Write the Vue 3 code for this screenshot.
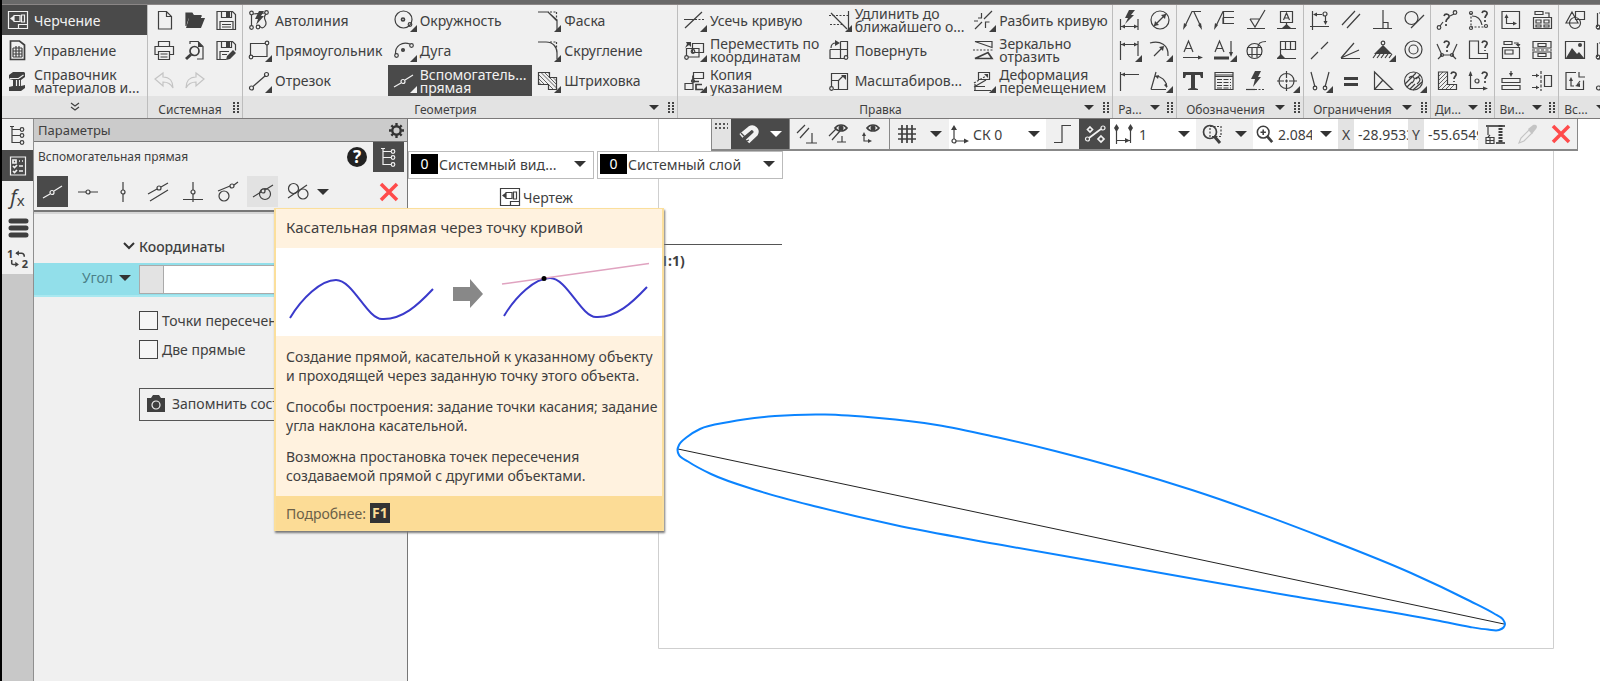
<script setup>
import { ref } from 'vue'

const icons = {
  drawing: '<path d="M.5 1.500h19v17h-19zM10.500 18.500v-4h9M3 8.500h3v-3h6v6h-6v-3M3 8.500l2-1.500v3zM13.500 5h3v7h-3z"/>',
  report: '<path d="M2.500 1h9l5 4v14.500h-14z" class="thick"/><path d="M5 8h9M5 11h9M5 14h9M5 17h9M5 8v9M8 6v11M11 6v11M14 8v9"/>',
  beam: '<path class="solid" d="M5 1h11l1 1v4l-4 3v6l4-1v3l-4 3H1v-4l4-1V9L1 8V4z"/><path class="cut" d="M1.500 7.500h9l5-3.500M8.500 9v6M11.500 9v6"/>',
  chevrons: '<path d="M4 3l4 3 4-3M4 7l4 3 4-3"/>',
  file: '<path d="M4.500 1.500h8l5 5v12.500h-13zM12.500 1.500v5h5"/>',
  folder: '<path d="M1 16V3h6l1.500 2.500H16V7" /><path class="solid" d="M4 8h16l-4 10H1z"/><path class="solid" d="M1 3h6l2 3h7v2H4l-3 8z"/>',
  save: '<path d="M1 1.500h15.500l3 3v15H1zM5.500 1.500v6h10v-6M4 19.500v-8h13v8M6 14.500h9M6 17h9"/><path class="solid" d="M10 2h4v5h-4z"/>',
  print: '<path d="M4.500 6.500v-5h11v5M4.500 14.500H1v-8h18.500v8h-4M4.500 11.500h11v8h-11zM6.500 14h7M6.500 17h7"/>',
  preview: '<path d="M5 4V1.500h8l5 5v12.500h-6"/><circle cx="9.500" cy="11" r="4.500" class="thick"/><path class="heavy" d="M6 14.500L1 19"/><path class="solid" d="M13 1v6h5z"/>',
  saveEdit: '<path d="M10 19.500H1v-18h15.500l3 3v6M5.500 1.500v6h10v-6M4 19.500v-8h9M6 14.500h5"/><path class="solid" d="M10 2h4v5h-4zM11 16l6-6 3 3-6 6-4 1z"/>',
  undo: '<path class="faint" d="M1 8l8-6v4c7 0 10 5 10 11-2-4-5-6-10-6v4z"/>',
  redo: '<path class="faint" d="M19 8l-8-6v4C4 6 1 11 1 17c2-4 5-6 10-6v4z"/>',
  autoline: '<path d="M2.500 16V5M4 4l12-1M17 4c-5 5 3 7-1 12-2 3-5 2-6-1"/><circle cx="2.500" cy="3" r="1.800"/><circle cx="2.500" cy="17.500" r="1.800"/><circle cx="17.500" cy="2.500" r="1.800"/><circle cx="9" cy="17" r="1.800"/><path class="solid" d="M10 1h5l-3 5h3l-8 9 2-6H6z"/>',
  rect: '<path d="M1.500 15V3.500H16M18 5v11.500H4"/><circle cx="18" cy="3" r="1.800"/><circle cx="2" cy="17" r="1.800"/>',
  segment: '<path d="M4 15.500L16 5"/><circle cx="17.500" cy="3.500" r="2"/><circle cx="2.500" cy="17" r="2"/>',
  circle: '<circle cx="9.500" cy="9.500" r="8.500"/><circle cx="9" cy="9.500" r="1.500" class="thick"/><circle cx="16" cy="14.500" r="1.800"/>',
  arc: '<path d="M1.500 14C1 6 8 1 16 4"/><circle cx="17.500" cy="5.500" r="1.800"/><circle cx="2.500" cy="15.500" r="1.800"/><circle cx="9" cy="10" r="1.200" class="thick"/>',
  auxline: '<path d="M0 16l7-4M11 9l8-5"/><circle cx="9" cy="10.500" r="2"/>',
  chamfer: '<path d="M0 2h10l9 8v10M10 2l9 9"/><path stroke-dasharray="2 1.500" d="M12 2h7M18.500 2v8"/>',
  fillet: '<path d="M0 2h8c7 0 11 5 11 11v6"/><path stroke-dasharray="2 1.500" d="M12 2h7M18.500 2v8"/>',
  hatch: '<path d="M.5 1.500h11v5h7v12h-8v-5h-10z"/><path class="thin" d="M.5 3.500l10 10M.5 7.500l6 6M.5 11l2.500 2.500M3 1.500l16 16M6.500 1.500l5 5M11.500 6.500l7 7M10 1.500l1.500 1.500M15 6.500l3.500 3.500M10.500 13.500l5 5"/>',
  trim: '<path d="M0 9.500h11M1 18L18 2"/><path stroke-dasharray="2 1.500" d="M11 9.500h9"/>',
  move: '<path d="M8.500 3.500h11v9h-11zM2.500 8v8M4 17h11V8.500H2.500"/><circle cx="9" cy="11.500" r="1.800"/><circle cx="2.500" cy="17.500" r="1.800"/><path class="solid" d="M2 2h5v5l-2-2-4 3 2-4z"/>',
  copyPoint: '<path d="M9.500 1.500h10v6h-10zM1 12.500h8v6H1z"/><path class="thick" d="M9 4.500v6h6M18 13.500h-6v5h7"/><circle cx="9" cy="10" r="1.500"/>',
  extend: '<path d="M2 3l16 16M19.500 1v18"/><path stroke-dasharray="2 1.500" d="M0 5.500h19M1 14.500h13"/>',
  rotate: '<path d="M11.500 1.500h7v15M11.500 1.500v17M1 9.500h17M1 9.500v9h14"/><circle cx="17" cy="17.500" r="1.800"/><path d="M2 8c0-3 2-5 5-5"/><path class="solid" d="M6 0l5 3-5 3z"/>',
  scale: '<path d="M2.500 16V2.500h16v16H4.500M2.500 9.500h7v9M9.500 9.500L14 5"/><circle cx="2.500" cy="17.500" r="1.800"/><path class="solid" d="M12 4h5v5z"/>',
  split: '<path d="M2 19L9 12M11 9l8-8M5 8h4M8.500 3v5M12.500 18v-6h4M1 11h4"/>',
  mirror: '<path d="M2 1.500h17v6z"/><path stroke-dasharray="2 1.500" d="M0 10h20"/><path class="thick" d="M2 18.500h17l-4-6z"/>',
  deform: '<path d="M5.500 1.500h11v7h-11zM1 16l12-7M2 15.500h10M1 19.500h17M2 13v6"/><path stroke-dasharray="2 1.500" d="M1 12l12-7"/><path class="solid" d="M11 3h4v4z"/>',
  autoDim: '<path d="M1.500 9v11M19 9v11M2 16.500h17"/><path class="solid" d="M10 0h6l-4 5h3l-9 9 3-6H6zM2 16.500l4-2v4zM19 16.500l-4-2v4z"/>',
  diameter: '<circle cx="10" cy="10" r="9"/><path d="M4 16L16 4"/><path class="solid" d="M16 4l-1 5-4-4zM4 16l1-5 4 4z"/>',
  linearDim: '<path d="M1.500 1v19M19 1v15M2 4.500h17"/><path class="solid" d="M2 4.500l4-2v4zM19 4.500l-4-2v4z"/>',
  radius: '<path d="M0 3c10-3 19 2 18 13M4 16l8-8"/><path class="solid" d="M14 6l-1 5-4-4z"/>',
  height: '<path d="M1.500 1v19M2 3.500h18"/><path class="solid" d="M2 3.500l4-2v4z"/>',
  angleDim: '<path d="M1 18.500L6 1M1 18.500h15M5 5c6 0 11 4 12 11"/><path class="solid" d="M5 5l4-1-1 4zM17 17l-3-3 3-2z"/>',
  leader: '<path d="M2 16L9 1.500h9M11 2l7 15"/><path class="solid" d="M0 20l1-7 3 2zM19 20l-4-5 3-2z"/>',
  leaderNote: '<path d="M2 16L9 1.500h11M9 7.500h11M9 7.500v6h11M9.500 2v12"/><path class="solid" d="M0 20l1-7 3 2z"/>',
  roughness: '<path d="M1 18.500h18M4 9h10M4 9l5 8L19 0"/>',
  base: '<path d="M3.500 1.500h12v11h-12zM9.500 13v5M0 18.500h19M6.500 10l3-7 3 7M7.500 8h4"/><path class="solid" d="M5 18l4.500-4 4.500 4z"/>',
  arrowA: '<path d="M1 12L5.500 1 10 12M2.500 8.500h6M0 17.500h17"/><path class="solid" d="M20 17.500l-5-2v4z"/>',
  lineA: '<path d="M1 12L5.500 1 10 12M2.500 8.500h6M17 1v13"/><path class="heavy" d="M0 18h15"/><path class="solid" d="M17 17l-2-5h4z"/>',
  section: '<circle cx="8.500" cy="11" r="7.500"/><path d="M1 7.500h15M1 14.500h15M6 7.500v10M11 7.500v10M12 7c0-4 3-5.500 8-5.500"/>',
  flag: '<path d="M3.500 18V1.500h15v8h-15M8.500 2v7M13.500 2v7M0 18.500h19"/><path class="solid" d="M0 18l4-4 4 4z"/>',
  text: '<path class="solid" d="M0 1h20v6h-2l-1-3h-5v13l3 1v1H5v-1l3-1V4H3L2 7H0z"/>',
  table: '<path d="M1 1.500h18v17H1zM1 5.500h18M1 4h18"/><path stroke-dasharray="5 1.500" d="M3 8.500h14M3 11.500h14M3 14.500h14M3 17h14"/>',
  bolt: '<path class="solid" d="M9 0h6l-3 6h3L7 16l2-8H5z"/><path d="M0 18.500h9"/><path stroke-dasharray="2 1.500" d="M9 18.500h10"/>',
  target: '<circle cx="9.500" cy="10" r="7.500"/><path d="M0 10h7M12 10h8M9.500 0v7M9.500 13v7M8 10h3M9.500 8.500v3"/>',
  snapFix: '<path d="M2.500 1v19M0 16.500h19M4 4.500h8M15.500 6v6"/><circle cx="15" cy="4" r="2"/><path class="solid" d="M3 4.500l4-2v4zM15.500 15l-2-4h4z"/>',
  parallel: '<path d="M1 15L14 1M6 18L19 4"/>',
  perpendicular: '<path d="M0 18.500h19M10 0v18M10 12.500h5v6"/>',
  tangentCircle: '<circle cx="7.500" cy="8" r="6.500"/><path d="M7 18L20 5"/>',
  collinear: '<path d="M1 19l7-7M11 9l7-7"/>',
  anglePair: '<path d="M0 18.500h19M0 18L18 10M0 18L13 3"/>',
  anchor: '<path class="solid" d="M10 5L1 14h18z"/><circle cx="10" cy="3" r="1.800"/><path d="M3 14l-3 4M7 14l-3 4M11 14l-3 4M15 14l-3 4M19 14l-3 4"/>',
  concentric: '<circle cx="9.500" cy="9.500" r="8.500"/><circle cx="9.500" cy="9.500" r="4.500"/>',
  symmetric: '<path d="M1 1l4 15M19 1l-4 15"/><circle cx="5" cy="17" r="1.800"/><circle cx="15" cy="17" r="1.800"/>',
  equal: '<path class="heavy" d="M3 7.500h14M3 13.500h14"/>',
  bisector: '<path d="M1.500 1v17.500h18zM1.500 18.500L10 9"/>',
  mesh: '<circle cx="9.500" cy="10" r="9"/><path d="M1 13L12 2M3 16L8 11M6 18l5-5M9 19l9-8M12 8l4-4"/><path d="M5 7c3-4 8 0 3 5M11 8c3-4 8 0 2 5"/>',
  distAsk: '<path d="M3 16L6 12M13 6l4-2"/><circle cx="2" cy="17.500" r="1.800"/><circle cx="18" cy="2.500" r="1.800"/><path class="thick" d="M7 6c1-3 6-2 5 1-1 2-3 2-3 5M9 14v2"/>',
  arcAsk: '<path stroke-dasharray="2 1.500" d="M3 3v14h14"/><path d="M4 6c7 0 9 4 10 9"/><circle cx="3" cy="3" r="1.500"/><circle cx="3" cy="18" r="1.500"/><circle cx="18" cy="16" r="1.500"/><path class="thick" d="M14 3c1-3 6-2 5 1-1 2-2 2-2 4M17 10v2"/>',
  nodesAsk: '<path d="M0 4l5 11-4 4M20 4l-5 11 4 4M6 15h8"/><circle cx="5" cy="15" r="1.500"/><circle cx="15" cy="15" r="1.500"/><path class="thick" d="M7 3c1-3 6-2 5 1-1 2-2 2-2 4M10 10v2"/>',
  areaAsk: '<path d="M1.500 1v17.500h18v-5h-9V1z"/><path class="thick" d="M14 3c1-3 6-2 5 1-1 2-2 2-2 4M17 10v1"/>',
  hatchAsk: '<path d="M1.500 1v17.500h18v-5h-9V1z"/><path class="thin" d="M2 5l4-4M2 9l8-8M2 13l8-8M2 17l8-8M5 18l5-5M9 18l5-5M13 18l5-5"/><path class="thick" d="M14 3c1-3 6-2 5 1-1 2-2 2-2 4M17 10v1"/>',
  coordAsk: '<path d="M2.500 1v16.500H19"/><circle cx="9" cy="10" r="2"/><path class="solid" d="M2.500 0L.5 5h4zM20 17.500l-5-2v4z"/><path class="thick" d="M14 3c1-3 6-2 5 1-1 2-2 2-2 4M17 10v2"/>',
  viewNew: '<path d="M1 1.500h17.500v17H1zM5.500 6v7.500H14"/><path class="solid" d="M5.500 4l-2 4h4zM16 13.500l-4-2v4z"/>',
  viewSet: '<path d="M3 1.500h8v3H3zM1.500 7.500h18v11h-18zM4 10h5v3H4zM12 10h5v3h-5zM4 15h5v2H4zM12 15h5v2h-5zM13 3h4v4"/>',
  viewLocal: '<path d="M3 1.500h8v3H3zM1.500 7.500h17v11h-17zM4 10h8v4H4zM13 3h4v3"/><path class="solid" d="M14.500 4l3 3 2-3z"/>',
  viewBreak: '<path d="M1 8V1.500h18V8zM6 3.500h8v3H6zM6 13.500h8v3H6zM1 12v6.500h18V12z"/><path stroke-dasharray="3 1.500" d="M0 10h20"/>',
  stack: '<path d="M1 7.500h18v4H1zM1 14.500h18v4H1zM10 0v4"/><path class="solid" d="M10 6L8 2h4z"/>',
  align: '<path d="M12.500 4.500h7v11h-7zM0 4.500h7M0 16.500h7"/><path stroke-dasharray="3 1.500" d="M9 0v20"/><path class="solid" d="M7 4.500l-3-2v4zM7 16.500l-3-2v4z"/>',
  shapes: '<path d="M7 2l6 11H1zM10.500 1.500h9v8h-9z"/><circle cx="10" cy="13" r="5.500"/>',
  image: '<path d="M.5 1.500h19v17H.5z"/><path class="solid" d="M1 18l6-10 5 6 2-2 5 6z"/><circle class="solid" cx="15" cy="5" r="2"/>',
  fragment: '<path d="M11 1.500H1v17h17.500v-9M6 8v7h3M15 10l-3 4M14 1v5h6"/><path class="solid" d="M6 6l-2 4h4zM10 15l5-3v4z"/>',
  box: '<path d="M1.500 3v14M3 3h16v16H1"/><circle cx="2" cy="17" r="1.800"/>',
  tree: '<path d="M2 1.500h4M4 2v16M4 4.500h8M4 10.500h8M4 17.500h8"/><circle cx="14" cy="4.500" r="1.800"/><circle cx="14" cy="10.500" r="1.800"/><circle cx="14" cy="17.500" r="1.800"/>',
  params: '<path d="M2.500 1h15v18h-15z"/><path class="thick" d="M5 4h3v3H5zM5 10l1.500 1.500L9 9M5 15l1.500 1.500L9 14M11 5h1M14 5h1M11 10h4M11 15h4"/>',
  layers: '<path class="bar" d="M3 3h15M3 10h15M3 17h15"/>',
  swap: '<path class="thick" d="M8 3.500h6q3 0 3 4M3 11v4q0 1 2 1h4"/><path class="solid" d="M7 3.500l4-3v6zM11 16l-4-3v6z"/>',
  gear: '<circle cx="8" cy="8" r="4.500" class="heavy2"/><path class="heavy2" d="M8 0v3M8 13v3M0 8h3M13 8h3M2.500 2.500l2 2M11.500 11.500l2 2M2.500 13.500l2-2M11.500 4.500l2-2"/>',
  hline: '<path d="M0 10h8M12 10h8"/><circle cx="10" cy="10" r="2"/>',
  vline: '<path d="M10 0v8M10 12v8"/><circle cx="10" cy="10" r="2"/>',
  parLine: '<path d="M0 12l9-5M13 5l7-4M2 19L20 8"/><circle cx="11" cy="6" r="2"/>',
  perpLine: '<path d="M0 17.500h20M10 0v8M10 12v5M10 17v3"/><circle cx="10" cy="10" r="2"/>',
  tanOut: '<circle cx="6" cy="14" r="5"/><path d="M0 9l12-5M16 3l4-3"/><circle cx="14" cy="4" r="2"/>',
  tanPoint: '<circle cx="12" cy="12" r="5.500"/><path d="M0 15l8-5M12 8l8-5"/><circle cx="10" cy="9" r="2"/>',
  tanTwo: '<circle cx="5.500" cy="6.500" r="5"/><circle cx="15" cy="12" r="5"/><path d="M0 16L19 3"/>',
  camera: '<path class="solid" d="M1 4h4l2-3h6l2 3h4v14H1z"/><circle class="cut" cx="10" cy="11" r="4"/>',
  magnet: '<path class="mag" d="M2 12L11 4.500A4 4 0 0 1 16.500 10L8.500 17.500"/><path class="magcut" d="M3 15l10-8.500M2 9l4 4M5 18l5-2"/>',
  snapLines: '<path d="M0 9l8-8M3 14l9-10M9 19h11M15 9v10"/>',
  eyeLines: '<path d="M0 12l7-7M3 16l8-9M8 18h9M13 12v6"/><path d="M6 4c3-4 9-4 12 0-3 4-9 4-12 0z" class="thick"/><circle class="solid" cx="12" cy="4" r="2.500"/>',
  eyeAxes: '<path class="thick" d="M6 4c3-4 9-4 12 0-3 4-9 4-12 0z"/><path d="M3 11v6h5"/><circle class="solid" cx="12" cy="4" r="2.500"/><path class="solid" d="M3 8l-2 4h4zM11 17l-4-2v4z"/>',
  grid: '<path class="thick" d="M5 1v18M10 1v18M15 1v18M1 5h18M1 10h18M1 15h18"/>',
  axes: '<path d="M4 4v11M6 17h10"/><circle cx="4" cy="17" r="2"/><path class="solid" d="M4 1L1 6h6zM19 17l-5-2.500v5z"/>',
  step: '<path d="M1 18.500h8v-17h9"/>',
  snapPts: '<path class="thick" d="M4 14L16 5"/><circle cx="2.500" cy="15" r="2"/><circle cx="18" cy="4" r="2"/><path class="thick" d="M5 3l2.500 2.500L5 8 2.500 5.500zM16 12l3 3-3 3-3-3z"/>',
  stepDim: '<path d="M2.500 3v17M16.500 3v16M3 16.500h13"/><path class="solid" d="M2.500 0L0 4l2.500 4L5 4zM16.500 0L14 4l2.500 4L19 4zM16 16.500l-5-2.500v5z"/>',
  zoomArea: '<circle cx="8" cy="8" r="6.500" class="thick"/><path class="heavy" d="M12 12l6 7"/><path stroke-dasharray="2 1.500" d="M8 2.500h11v10H8z"/>',
  zoomIn: '<circle cx="8" cy="8" r="6.500" class="thick"/><path class="heavy" d="M12 12l6 7"/><path class="thick" d="M5 8h6M8 5v6"/>',
  crane: '<path d="M3 3v8M1 13.500h8v6H1zM1 16.500h8M5 13.500v6M5 11l-2 2"/><path class="thick" d="M1 2h19"/><path class="heavy4" stroke-dasharray="2 1" d="M15.500 1v18"/><path class="thick" d="M11 19h9"/>',
  pipette: '<path class="faint" d="M1 19l2-5 8-8 3 3-8 8z"/><path class="faintfill" d="M10 5l5-4c4-1 5 2 3 4l-4 5z"/>',
  cross: '<path class="cross" d="M2 2l16 16M18 2L2 18"/>',
}

const modes = [
  { icon: 'drawing', label: 'Черчение', active: true },
  { icon: 'report', label: 'Управление' },
  { icon: 'beam', label: 'Справочник\nматериалов и...' },
]

const groups = [
  { title: 'Системная', kind: 'sys', icons: ['file', 'folder', 'save', 'print', 'preview', 'saveEdit', 'undo', 'redo'] },
  {
    title: 'Геометрия', kind: 'wide', arrow: true, items: [
      ['autoline', 'Автолиния'], ['circle', 'Окружность', 1], ['chamfer', 'Фаска', 1],
      ['rect', 'Прямоугольник', 1], ['arc', 'Дуга', 1], ['fillet', 'Скругление', 1],
      ['segment', 'Отрезок', 1], ['auxline', 'Вспомогатель...\nпрямая', 1, 1], ['hatch', 'Штриховка', 1],
    ],
  },
  {
    title: 'Правка', kind: 'wide', arrow: true, items: [
      ['trim', 'Усечь кривую', 1], ['extend', 'Удлинить до\nближайшего о...', 1], ['split', 'Разбить кривую', 1],
      ['move', 'Переместить по\nкоординатам', 1], ['rotate', 'Повернуть'], ['mirror', 'Зеркально\nотразить'],
      ['copyPoint', 'Копия\nуказанием', 1], ['scale', 'Масштабиров...'], ['deform', 'Деформация\nперемещением', 1],
    ],
  },
  { title: 'Ра...', kind: 'two', arrow: true, icons: ['autoDim', 'diameter', 'linearDim+', 'radius+', 'height', 'angleDim+'] },
  { title: 'Обозначения', kind: 'four', arrow: true, icons: ['leader', 'leaderNote', 'roughness', 'base', 'arrowA', 'lineA+', 'section', 'flag', 'text', 'table', 'bolt', 'target+'] },
  { title: 'Ограничения', kind: 'four', arrow: true, icons: ['snapFix', 'parallel', 'perpendicular', 'tangentCircle', 'collinear', 'anglePair', 'anchor+', 'concentric', 'symmetric+', 'equal', 'bisector', 'mesh+'] },
  { title: 'Ди...', kind: 'two', arrow: true, icons: ['distAsk', 'arcAsk', 'nodesAsk', 'areaAsk', 'hatchAsk', 'coordAsk'] },
  { title: 'Ви...', kind: 'two', arrow: true, icons: ['viewNew', 'viewSet', 'viewLocal', 'viewBreak', 'stack', 'align'] },
  { title: 'Вс...', kind: 'two', arrow: true, icons: ['shapes', 'box', 'image', 'box', 'fragment', 'segment'] },
]

const lineTools = ['auxline', 'hline', 'vline', 'parLine', 'perpLine', 'tanOut', 'tanPoint', 'tanTwo']
const name = (s) => s.replace('+', '')

const angle = ref('')
const crossings = ref(false)
const twoLines = ref(false)

// Airfoil outline, sampled clockwise from the nose; canvas pixels.
const profile = [
  [269.5, 331], [271, 326], [279, 318], [292, 310], [321, 305 - 2], [367, 297], [417, 295.5], [471, 299], [529, 306], [588, 318],
  [647, 332], [784, 371], [914, 418], [1003, 454], [1062, 482],
  [1086, 494.5], [1095, 500.5], [1097, 505], [1095.5, 508.5], [1091, 511], [1080, 510.5], [1062, 508], [1032, 502],
  [884, 477], [736, 451], [588, 425], [487, 406], [410, 388], [351, 372], [303, 355], [280, 342.5], [271, 336],
]
const outline = (() => {
  const n = profile.length
  const p = (i) => profile[(i + n) % n]
  const dist = (a, b) => Math.hypot(b[0] - a[0], b[1] - a[1])
  const slope = (i) => {
    const [a, b, c] = [p(i - 1), p(i), p(i + 1)]
    const [d1, d2] = [dist(a, b), dist(b, c)]
    return [0, 1].map((k) => ((b[k] - a[k]) / d1 * d2 + (c[k] - b[k]) / d2 * d1) / (d1 + d2))
  }
  let d = `M${p(0)}`
  for (let i = 0; i < n; i++) {
    const [b, c, m, k] = [p(i), p(i + 1), slope(i), slope(i + 1)]
    const h = dist(b, c) / 3
    d += `C${b[0] + m[0] * h} ${b[1] + m[1] * h} ${c[0] - k[0] * h} ${c[1] - k[1] * h} ${c[0]} ${c[1]}`
  }
  return d + 'Z'
})()
</script>

<template>
  <div class="app">
    <div class="edge"></div>
    <div class="window">
      <div class="titlebar"></div>
      <header class="ribbon">
        <nav class="modes">
          <button v-for="m in modes" :key="m.label" class="mode" :class="{ active: m.active }">
            <svg class="ic" viewBox="0 0 20 20" v-html="icons[m.icon]"></svg><span>{{ m.label }}</span>
          </button>
          <button class="more" aria-label="Ещё"><svg viewBox="0 0 16 14" v-html="icons.chevrons"></svg></button>
        </nav>
        <section v-for="g in groups" :key="g.title" class="group" :class="g.kind">
          <div class="cells">
            <template v-if="g.items">
              <button v-for="it in g.items" :key="it[1]" class="item" :class="{ active: it[3] }">
                <span class="iw">
                  <svg class="ic" viewBox="0 0 20 20" v-html="icons[it[0]]"></svg>
                  <i v-if="it[2]" class="tri"></i>
                </span><span>{{ it[1] }}</span>
              </button>
            </template>
            <template v-else>
              <button v-for="(ic, i) in g.icons" :key="i" class="cell" :aria-label="name(ic)">
                <span class="iw">
                  <svg class="ic" viewBox="0 0 20 20" v-html="icons[name(ic)]"></svg>
                  <i v-if="ic.endsWith('+')" class="tri"></i>
                </span>
              </button>
            </template>
          </div>
          <footer class="gfoot">
            <span class="gtitle">{{ g.title }}</span>
            <i v-if="g.arrow" class="arrow"></i>
            <i class="grip"></i>
          </footer>
        </section>
      </header>

      <main class="work">
        <aside class="rail">
          <button class="rb" aria-label="Дерево"><svg class="ic" viewBox="0 0 20 20" v-html="icons.tree"></svg></button>
          <button class="rb active" aria-label="Параметры"><svg class="ic" viewBox="0 0 20 20" v-html="icons.params"></svg></button>
          <button class="rb fx"><i>f</i><sub>x</sub></button>
          <button class="rb" aria-label="Слои"><svg class="ic" viewBox="0 0 20 20" v-html="icons.layers"></svg></button>
          <button class="rb num">
            <svg class="ic" viewBox="0 0 20 20" v-html="icons.swap"></svg>
            <b class="n1">1</b><b class="n2">2</b>
          </button>
        </aside>

        <section class="panel">
          <div class="phead"><span>Параметры</span><svg class="gear" viewBox="0 0 16 16" v-html="icons.gear"></svg></div>
          <div class="pname">
            <span class="plabel">Вспомогательная прямая</span>
            <button class="help">?</button>
            <button class="treebtn" aria-label="Дерево"><svg class="ic" viewBox="0 0 20 20" v-html="icons.tree"></svg></button>
          </div>
          <div class="ptools">
            <button v-for="(t, i) in lineTools" :key="t" class="pt" :class="{ active: i === 0, hover: i === 6 }" :aria-label="t">
              <svg class="ic" viewBox="0 0 20 20" v-html="icons[t]"></svg>
            </button>
            <i class="arrow"></i>
            <button class="close" aria-label="Закрыть"><svg class="ic" viewBox="0 0 20 20" v-html="icons.cross"></svg></button>
          </div>
          <div class="pbody">
            <h3 class="sect"><svg viewBox="0 0 12 8"><path d="M1 1l5 5 5-5" /></svg>Координаты</h3>
            <div class="angle">
              <label for="angle">Угол<i class="arrow"></i></label>
              <span class="pre"></span>
              <input id="angle" v-model="angle" type="text">
            </div>
            <label class="check first"><input v-model="crossings" type="checkbox">Точки пересечения</label>
            <label class="check"><input v-model="twoLines" type="checkbox">Две прямые</label>
            <button class="remember"><svg class="ic" viewBox="0 0 20 20" v-html="icons.camera"></svg>Запомнить состояние</button>
          </div>
        </section>

        <section class="canvas">
          <svg class="sheet">
            <path class="frame" d="M250.500 0V529.500H1145.500V0" />
            <path class="strip" d="M256 125.500H374" />
            <path class="chord" d="M270 330L1096 505" />
            <path class="foil" :d="outline" />
          </svg>
          <span class="ratio">1:1)</span>

          <div class="toolbar">
            <i class="tgrip"></i>
            <button class="tdark magnet" aria-label="Привязки"><svg class="ic" viewBox="0 0 20 20" v-html="icons.magnet"></svg><i class="arrow"></i></button>
            <div class="seg snaps">
              <button aria-label="Параллельность"><svg class="ic" viewBox="0 0 20 20" v-html="icons.snapLines"></svg></button>
              <button aria-label="Показать ограничения"><svg class="ic" viewBox="0 0 20 20" v-html="icons.eyeLines"></svg></button>
              <button aria-label="Показать оси"><svg class="ic" viewBox="0 0 20 20" v-html="icons.eyeAxes"></svg></button>
            </div>
            <button class="seg gridb" aria-label="Сетка"><svg class="ic" viewBox="0 0 20 20" v-html="icons.grid"></svg><i class="arrow"></i></button>
            <label class="seg field ck"><svg class="ic" viewBox="0 0 20 20" v-html="icons.axes"></svg><select aria-label="Система координат"><option>СК 0</option></select><i class="arrow"></i></label>
            <button class="seg stepb" aria-label="Ортогональность"><svg class="ic" viewBox="0 0 20 20" v-html="icons.step"></svg></button>
            <button class="tdark" aria-label="Точки"><svg class="ic" viewBox="0 0 20 20" v-html="icons.snapPts"></svg></button>
            <label class="seg field stepf"><svg class="ic" viewBox="0 0 20 20" v-html="icons.stepDim"></svg><select aria-label="Шаг"><option>1</option></select><i class="arrow"></i></label>
            <button class="seg zoomb" aria-label="Масштаб области"><svg class="ic" viewBox="0 0 20 20" v-html="icons.zoomArea"></svg><i class="arrow"></i></button>
            <label class="seg field zoomf"><svg class="ic" viewBox="0 0 20 20" v-html="icons.zoomIn"></svg><input aria-label="Масштаб" value="2.084"><i class="arrow"></i></label>
            <label class="axis" for="cx">X</label><input id="cx" class="coord" value="-28.9533">
            <label class="axis" for="cy">Y</label><input id="cy" class="coord" value="-55.6549">
            <button class="seg tail" aria-label="Библиотека"><svg class="ic" viewBox="0 0 20 20" v-html="icons.crane"></svg></button>
            <button class="seg tail" aria-label="Пипетка"><svg class="ic" viewBox="0 0 20 20" v-html="icons.pipette"></svg></button>
            <button class="seg tail" aria-label="Закрыть"><svg class="ic" viewBox="0 0 20 20" v-html="icons.cross"></svg></button>
          </div>

          <div class="pickers">
            <label class="picker"><b>0</b><select aria-label="Вид"><option>Системный вид...</option></select><i class="arrow"></i></label>
            <label class="picker"><b>0</b><select aria-label="Слой"><option>Системный слой</option></select><i class="arrow"></i></label>
          </div>
          <div class="root"><svg class="ic" viewBox="0 0 20 20" v-html="icons.drawing"></svg>Чертеж</div>
        </section>

        <div class="tip" role="tooltip">
          <h4>Касательная прямая через точку кривой</h4>
          <svg class="demo" viewBox="0 0 386 88">
            <path class="wave" d="M14 70C26 50 45 32 60 32C77 32 91 71 106 71C126 72 142 57 157 41" />
            <path class="big" d="M177 39h17v-8l13 15-13 14v-7h-17z" />
            <path class="wave" d="M228 68C240 48 259 30 274 30C291 30 305 69 320 69C340 70 356 55 371 39" />
            <path class="tangent" d="M226 36L373 15.500" />
            <circle cx="268" cy="30.500" r="2.500" />
          </svg>
          <div class="tbody">
            <p>Создание прямой, касательной к указанному объекту<br>и проходящей через заданную точку этого объекта.</p>
            <p>Способы построения: задание точки касания; задание<br>угла наклона касательной.</p>
            <p>Возможна простановка точек пересечения<br>создаваемой прямой с другими объектами.</p>
          </div>
          <footer>Подробнее: <kbd>F1</kbd></footer>
        </div>
      </main>
    </div>
  </div>
</template>

<style>
body { overflow: hidden; }
.ic path, .ic circle, .more path { fill: none; stroke: currentColor; stroke-width: 1.2; }
.ic .solid { fill: currentColor; stroke: none; }
.ic .thin { stroke-width: .8; }
.ic .thick { stroke-width: 1.700; }
.ic .heavy { stroke-width: 3; }
.ic .heavy4 { stroke-width: 4; }
.ic .bar { stroke-width: 5; stroke-linecap: round; }
.ic .cut { stroke: #f0f0f0; stroke-width: 1.2; }
.ic .faint { stroke: #c4c4c4; }
.ic .faintfill { fill: #c4c4c4; stroke: none; }
.ic .cross { stroke: #ff4b4b; stroke-width: 3.500; }
.ic .mag { stroke-width: 5; }
.ic .magcut { stroke: #4a4a4a; }
.gear path, .gear circle { fill: none; stroke: #333; stroke-width: 2.500; }
</style>

<style scoped>
* { box-sizing: border-box; }
.app { display: flex; min-height: 100vh; font: 14px/13px "Noto Sans", "Open Sans", sans-serif; color: #3f3f3f; background: #f0f0f0; }
button { font: inherit; color: inherit; background: none; border: 0; padding: 0; margin: 0; text-align: left; }
input, select { font: inherit; color: inherit; border: 0; margin: 0; padding: 0; background: none; min-width: 0; outline: 0; border-radius: 0; }
select { appearance: none; }
.ic { width: 20px; height: 20px; flex: none; display: block; overflow: visible; }
.edge { width: 2px; background: #000; flex: none; }
.window { flex: 1; min-width: 0; display: flex; flex-direction: column; }
.titlebar { height: 5px; background: #696969; border-bottom: 1px solid #8a8686; }
.arrow { width: 0; height: 0; flex: none; border: 6px solid transparent; border-top-color: #333; border-bottom: 0; }

.ribbon { display: flex; height: 114px; border-bottom: 1px solid #7b7979; overflow: hidden; }
.modes { flex: none; width: 146px; display: flex; flex-direction: column; border-right: 1px solid #bdbdbd; }
.mode { height: 30px; display: flex; align-items: center; gap: 6px; padding-left: 6px; white-space: pre; }
.mode.active { background: #4a4a4a; color: #f2f2f2; }
.mode:nth-child(3) { height: 31px; }
.more { flex: 1; display: flex; align-items: flex-start; justify-content: center; padding-top: 4px; background: #e3e3e3; }
.more svg { width: 16px; height: 14px; }
.group { flex: none; display: flex; flex-direction: column; border-right: 1px solid #bdbdbd; }
.group.sys { width: 95px; }
.group.wide { width: 435px; }
.group.two { width: 64px; }
.group.four { width: 127px; }
.cells { display: grid; grid-template-rows: 30px 30px 31px; grid-template-columns: 1fr 1fr; height: 91px; }
.sys .cells, .wide .cells { grid-template-columns: repeat(3, 1fr); }
.four .cells { grid-template-columns: repeat(4, 1fr); }
.item { display: flex; align-items: center; gap: 6px; padding-left: 6px; white-space: pre; }
.item.active { background: #4a4a4a; color: #f2f2f2; }
.cell { display: flex; align-items: center; justify-content: center; }
.iw { position: relative; display: block; }
.tri { position: absolute; left: 16px; bottom: -2px; border-left: 7px solid transparent; border-bottom: 7px solid currentColor; }
.gfoot { flex: 1; display: flex; align-items: center; gap: 9px; padding: 0 3px 0 8px; background: #e3e3e3; font-size: 12px; line-height: 14px; }
.gfoot .arrow { border-width: 5px 5px 0; }
.two .gfoot { gap: 7px; padding-left: 4px; }
.gtitle { flex: 1; text-align: center; white-space: nowrap; padding-top: 5px; }
.grip { flex: none; width: 6px; height: 11px; background: radial-gradient(circle at 1px 1px, #444 1px, transparent 1px) 0 0 / 4px 3px; }

.work { flex: 1; display: flex; position: relative; }
.rail { flex: none; width: 32px; background: #c8c8c8; border-right: 1px solid #8f8f8f; }
.rb { width: 31px; height: 31px; display: flex; align-items: center; justify-content: center; background: #f0f0f0; position: relative; }
.rb.active { background: #4a4a4a; color: #f2f2f2; }
.fx { font-size: 20px; }
.fx sub { font-size: 15px; margin-top: 8px; }
.num b { position: absolute; font-size: 11px; line-height: 11px; }
.n1 { left: 5px; top: 5px; }
.n2 { right: 5px; bottom: 5px; }
.num .ic { width: 18px; }

.panel { flex: none; width: 374px; display: flex; flex-direction: column; border-right: 1px solid #777; }
.phead { height: 23px; display: flex; align-items: center; justify-content: space-between; padding: 0 3px 0 4px; background: #cbcbcb; border-bottom: 1px solid #777; font-size: 13px; }
.gear { width: 15px; height: 15px; }
.pname { display: flex; align-items: center; height: 30px; padding: 0 3px 0 4px; font-size: 12px; }
.plabel { flex: 1; padding-bottom: 1px; }
.help { width: 20px; height: 20px; border-radius: 50%; background: #222; color: #fff; font-weight: 700; font-size: 17px; line-height: 20px; text-align: center; margin-right: 6px; }
.treebtn { width: 31px; height: 30px; display: grid; place-items: center; background: #4a4a4a; color: #f2f2f2; }
.ptools { display: flex; align-items: center; gap: 4px; padding: 4px 8px 3px 3px; border-bottom: 2px solid #777; }
.pt { width: 31px; height: 31px; display: grid; place-items: center; }
.pt.active { background: #4a4a4a; color: #f2f2f2; }
.pt.hover { background: #e2e2e2; }
.close { margin-left: auto; }
.pbody { border-top: 2px solid #d6d6d6; }
.sect { display: flex; align-items: center; gap: 4px; margin: 0; padding: 15px 0 0 89px; height: 49px; font-size: 14px; font-weight: 500; }
.sect svg { width: 12px; height: 8px; fill: none; stroke: #333; stroke-width: 2; }
.angle { display: grid; grid-template-columns: 105px 25px 1fr; height: 34px; background: #92dfea; border-bottom: 2px solid #a9e8f0; padding: 2px 0 1px; }
.angle label { display: flex; align-items: center; justify-content: flex-end; gap: 6px; padding: 0 8px 4px 0; color: #4b7f88; }
.pre { background: #e3e3e3; border: 1px solid #aaa; }
.angle input { background: #fff; border: 1px solid #aaa; border-left: 0; }
.check { display: flex; align-items: center; gap: 4px; height: 19px; margin: 10px 0 0 105px; white-space: nowrap; }
.check.first { margin-top: 14px; }
.check input { appearance: none; width: 19px; height: 19px; border: 1px solid #444; background: #f6f6f6; }
.remember { display: flex; align-items: center; gap: 6px; margin: 29px 0 0 105px; width: 240px; height: 33px; padding: 0 0 2px 6px; border: 1px solid #555; white-space: nowrap; }

.canvas { flex: 1; min-width: 0; position: relative; background: #fff; overflow: hidden; }
.sheet { position: absolute; left: 0; top: 0; width: 100%; height: 100%; fill: none; }
.frame { stroke: #cfcfcf; }
.strip { stroke: #555; }
.chord { stroke: #222; }
.foil { stroke: #0b84ff; stroke-width: 2; }
.ratio { position: absolute; left: 252px; top: 135px; font-weight: 700; }
.toolbar { position: relative; display: flex; width: max-content; margin-left: 303px; height: 32px; border: 1px solid #888; border-top: 0; border-bottom-width: 2px; background: #f0f0f0; }
.toolbar button { display: flex; align-items: center; justify-content: center; }
.tgrip { width: 19px; background: radial-gradient(circle at 1px 1px, #555 1px, transparent 1px) 0 0 / 4px 4px content-box, #e3e3e3; padding: 4px 3px 18px; }
.toolbar .tdark { width: 31px; background: #4a4a4a; color: #f2f2f2; }
.toolbar .magnet { width: 58px; gap: 11px; }
.magnet .arrow { border-top-color: #fff; }
.snaps { display: flex; gap: 12px; width: 101px; padding-left: 7px; border-left: 1px solid #888; border-right: 1px solid #888; }
.gridb { width: 59px; gap: 13px; }
.field { display: flex; align-items: center; background: #fff; gap: 4px; }
.ck { width: 97px; padding: 0 6px 0 1px; gap: 3px; }
.ck select, .stepf select, .zoomf input { flex: 1; width: 0; }
.stepb { width: 33px; }
.stepf { width: 86px; padding: 0 6px 0 4px; gap: 5px; }
.zoomb { width: 57px; gap: 13px; }
.zoomf { width: 85px; padding: 0 6px 0 3px; gap: 4px; }
.zoomf .arrow { margin-left: 4px; }
.zoomf .ic { width: 18px; }
.axis { width: 16px; background: #e3e3e3; display: grid; place-items: center; }
.coord { width: 54px; background: #fff; padding-left: 4px; }
.tail { width: 33px; }
.pickers { position: relative; display: flex; gap: 3px; }
.picker { width: 186px; height: 28px; display: flex; align-items: center; gap: 1px; border: 1px solid #bbb; background: #fff; padding: 0 7px 2px 2px; }
.picker b { width: 27px; height: 20px; background: #000; color: #fff; font-weight: 400; line-height: 20px; text-align: center; }
.picker select { flex: 1; }
.root { position: relative; display: flex; align-items: center; gap: 3px; padding: 8px 0 0 92px; }

.tip { position: absolute; left: 272px; top: 89px; width: 390px; border: 2px solid #fbdf9c; border-width: 1px 2px; background: #fff2df; box-shadow: 1px 2px 2px #777; line-height: 19px; }
.tip h4 { margin: 0; padding: 9px 10px 11px; font-size: 15px; font-weight: 400; }
.demo { display: block; width: 100%; height: 88px; background: #fff; }
.wave { fill: none; stroke: #3a3acb; stroke-width: 2; }
.big { fill: #888; }
.tangent { stroke: #e0a3c0; stroke-width: 1.500; }
.tbody { padding: 11px 0 11px 10px; white-space: nowrap; }
.tbody p { margin: 0 0 12px; }
.tbody p:last-child { margin: 0; }
.tip footer { display: flex; align-items: center; gap: 4px; height: 34px; padding-left: 10px; background: #fcdc96; color: #6a6048; }
kbd { width: 20px; height: 20px; background: #333; color: #fcdc96; font: 700 14px/20px "Noto Sans", sans-serif; text-align: center; }
</style>
